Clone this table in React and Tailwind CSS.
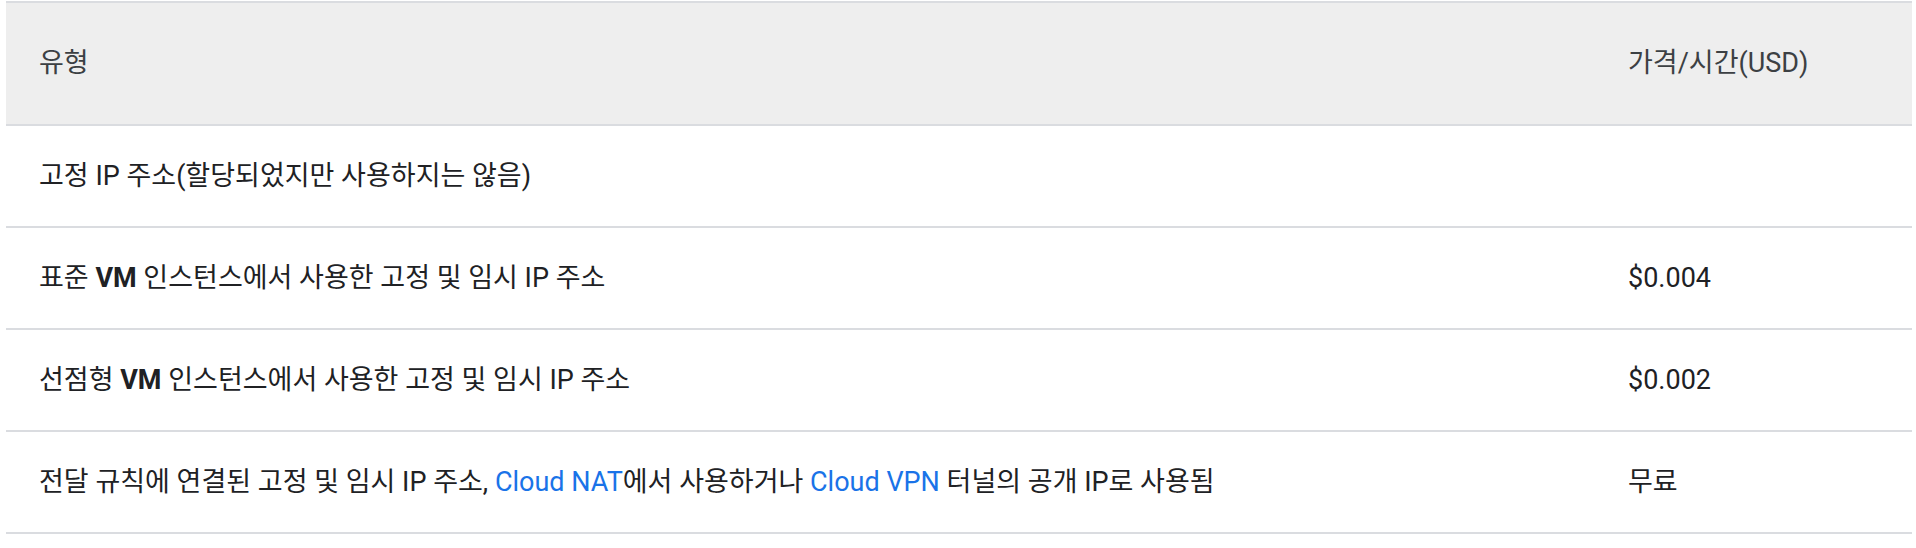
const rows = [
  { type: <>고정 IP 주소(할당되었지만 사용하지는 않음)</>, price: "" },
  {
    type: (
      <>
        표준 <b className="font-bold">VM</b> 인스턴스에서 사용한 고정 및 임시 IP 주소
      </>
    ),
    price: "$0.004",
  },
  {
    type: (
      <>
        선점형 <b className="font-bold">VM</b> 인스턴스에서 사용한 고정 및 임시 IP 주소
      </>
    ),
    price: "$0.002",
  },
  {
    type: (
      <>
        전달 규칙에 연결된 고정 및 임시 IP 주소,{" "}
        <a className="text-[#1a73e8]">Cloud NAT</a>에서 사용하거나{" "}
        <a className="text-[#1a73e8]">Cloud VPN</a> 터널의 공개 IP로 사용됨
      </>
    ),
    price: "무료",
  },
];

export default function App() {
  return (
    <div
      className="min-h-[548px] bg-white pt-px pl-[6px] text-[27px] text-[#202124]"
      style={{ fontFamily: 'Roboto, "Noto Sans CJK KR", sans-serif' }}
    >
      <div className="w-[1906px] border-t-2 border-[#dadce0]">
        {/* Header */}
        <div className="grid h-[123px] grid-cols-[1fr_317px] items-center border-b-2 border-[#dadce0] bg-[#eeeeee] text-[#3c4043]">
          <div className="pl-[33px]">유형</div>
          <div className="pl-[33px]">가격/시간(USD)</div>
        </div>

        {/* Rows */}
        {rows.map((row, i) => (
          <div
            key={i}
            className="grid h-[102px] grid-cols-[1fr_317px] items-center border-b-2 border-[#dadce0]"
          >
            <div className="pl-[33px]">{row.type}</div>
            <div className="pl-[33px]">{row.price}</div>
          </div>
        ))}
      </div>
    </div>
  );
}
